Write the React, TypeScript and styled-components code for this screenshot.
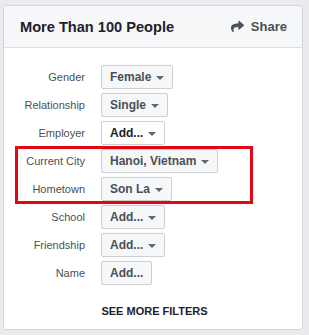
import React from 'react';
import styled, { createGlobalStyle } from 'styled-components';
import { FaShare } from 'react-icons/fa';

const GlobalStyle = createGlobalStyle`
    html, body {
        margin: 0;
        padding: 0;
        background: #e9ebee;
        font-family: "Liberation Sans", Arial, sans-serif;
    }
`;

const Page = styled.div`
    padding: 5px 6px 4px 3px;
`;

const Card = styled.div`
    background: #fff;
    border: 1px solid #d3d6db;
    border-radius: 3px;
    overflow: hidden;
`;

const Header = styled.div`
    height: 41px;
    background: #f6f7f9;
    border-bottom: 1px solid #dddfe2;
    display: flex;
    align-items: center;
    justify-content: space-between;
    padding: 0 15px 0 16px;
`;

const Title = styled.h2`
    margin: 0;
    font-size: 14.6px;
    font-weight: bold;
    color: #1d2129;
`;

const ShareLink = styled.span`
    display: flex;
    align-items: center;
    gap: 7px;
    font-size: 13px;
    font-weight: bold;
    color: #4b4f56;
`;

const Body = styled.div`
    padding: 17px 0 12px;
`;

const Rows = styled.div`
    display: flex;
    flex-direction: column;
    gap: 4px;
`;

const Highlight = styled.div`
    display: flex;
    flex-direction: column;
    gap: 4px;
    border: 3px solid #e30613;
    margin: -3px 49px -3px 11px;
    padding: 0;
`;

const Row = styled.div<{ $inset?: number }>`
    display: grid;
    grid-template-columns: ${props => 81 - (props.$inset || 0)}px auto;
    column-gap: 16px;
    align-items: center;
    justify-items: start;
    height: 24px;
`;

const Label = styled.span`
    justify-self: end;
    font-size: 11px;
    color: #4b4f56;
`;

const Button = styled.button<{ $strong?: boolean }>`
    height: 24px;
    display: inline-flex;
    align-items: center;
    gap: 5px;
    padding: 0 8px;
    background: ${props => props.$strong ? '#fff' : '#f6f7f9'};
    border: 1px solid #ced0d4;
    border-radius: 2px;
    font-family: inherit;
    font-size: 12px;
    font-weight: bold;
    color: ${props => props.$strong ? '#1d2129' : '#4b4f56'};
`;

const Caret = styled.span`
    width: 0;
    height: 0;
    border-left: 4px solid transparent;
    border-right: 4px solid transparent;
    border-top: 4px solid #606770;
    margin-top: 1px;
`;

const MoreFilters = styled.div`
    margin-top: 20px;
    text-align: center;
    font-size: 11px;
    font-weight: bold;
    color: #1d2129;
    padding-left: 3px;
`;

interface FilterProps {
    label: string,
    value: string,
    caret?: boolean,
    strong?: boolean,
    inset?: number
}

const Filter = ({ label, value, caret = true, strong, inset }: FilterProps) => (
    <Row $inset={inset}>
        <Label>{label}</Label>
        <Button $strong={strong}>
            {value}
            {caret && <Caret />}
        </Button>
    </Row>
);

export default function App() {
    return (
        <Page>
            <GlobalStyle />
            <Card>
                <Header>
                    <Title>More Than 100 People</Title>
                    <ShareLink>
                        <FaShare size={13} />
                        Share
                    </ShareLink>
                </Header>
                <Body>
                    <Rows>
                        <Filter label="Gender" value="Female" />
                        <Filter label="Relationship" value="Single" />
                        <Filter label="Employer" value="Add..." strong />
                        <Highlight>
                            <Filter label="Current City" value="Hanoi, Vietnam" inset={14} />
                            <Filter label="Hometown" value="Son La" inset={14} />
                        </Highlight>
                        <Filter label="School" value="Add..." />
                        <Filter label="Friendship" value="Add..." />
                        <Filter label="Name" value="Add..." caret={false} />
                    </Rows>
                    <MoreFilters>SEE MORE FILTERS</MoreFilters>
                </Body>
            </Card>
        </Page>
    );
}
